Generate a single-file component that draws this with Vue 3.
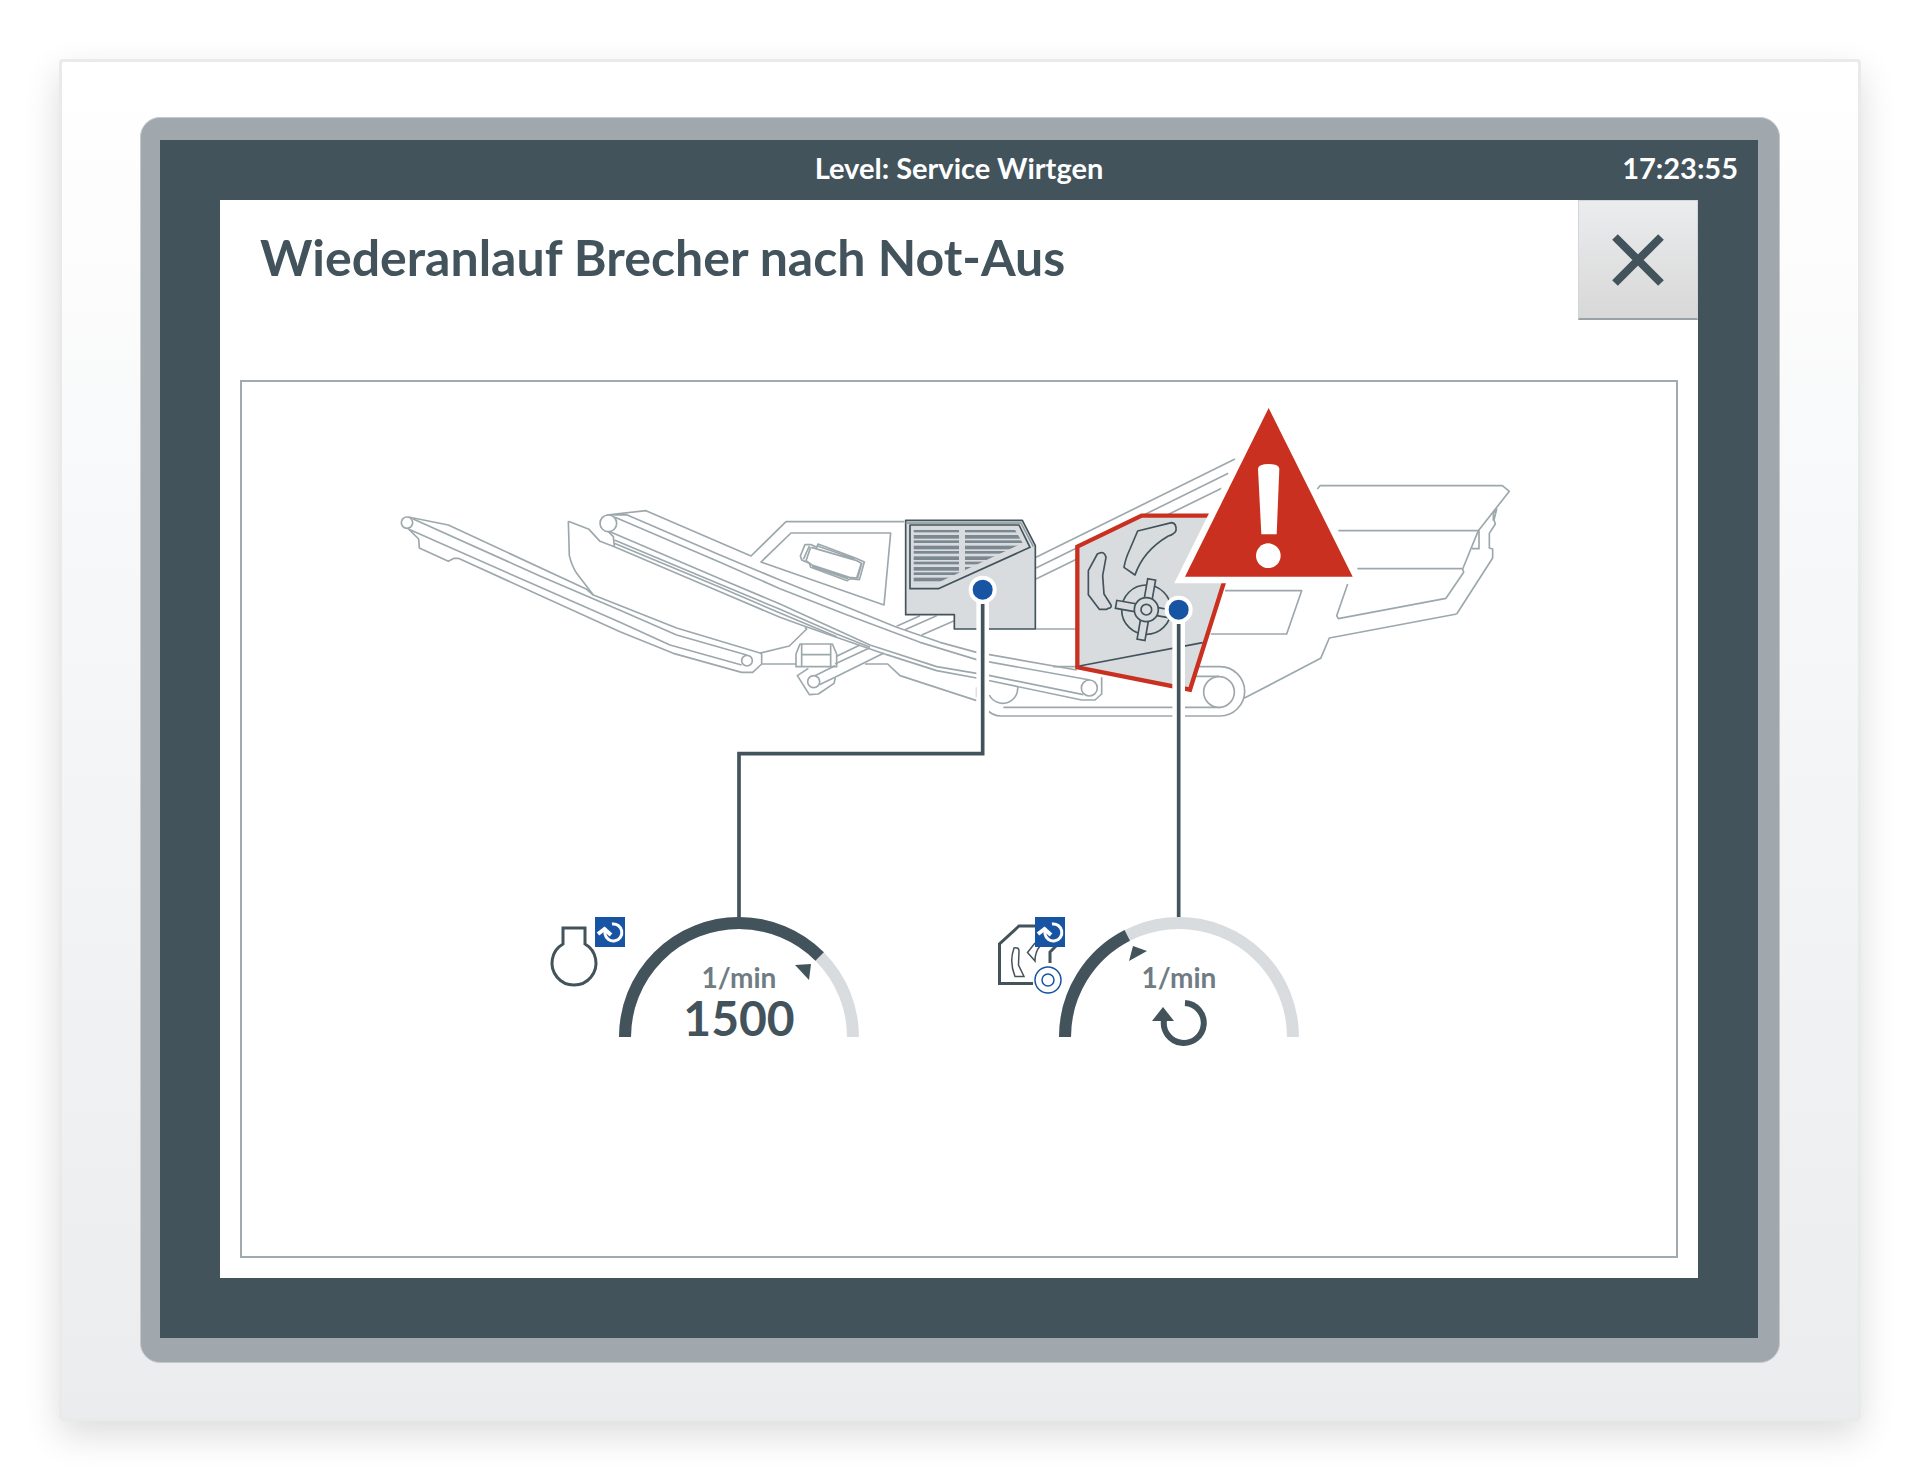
<template>
  <div class="page">
    <div class="housing">
      <div class="bezel">
        <div class="screen">
          <header class="status-bar">
            <span class="level">Level: Service Wirtgen</span>
            <time class="clock">17:23:55</time>
          </header>

          <main class="dialog">
            <div class="dialog-head">
              <h1>Wiederanlauf Brecher nach Not-Aus</h1>
              <button type="button" class="close" aria-label="Schließen">
                <svg viewBox="0 0 52 52" width="52" height="52">
                  <path d="M3 3L49 49M49 3L3 49" />
                </svg>
              </button>
            </div>

            <section class="frame">
              <svg class="machine" viewBox="0 -2 4302 1605" role="img" aria-label="Maschine">
                <defs>
                  <clipPath id="louvre">
                    <path d="M580 117H885L908 157L650 278H580Z" />
                  </clipPath>
                </defs>

                <!-- side discharge conveyor -->
                <g class="line" transform="translate(414 324)">
                  <path d="M565 92L627 116L660 152L703 168M565 92L568 195Q575 225 590 248L640 313" />
                  <path d="M85 79L205 103L620 296L640 313L890 412L1140 487L1145 490V520L1118 545H1085L880 488L720 423L235 203H222L205 212L118 172L116 145L84 113" />
                  <path d="M98 84L480 256L720 359L890 433L1100 493" />
                  <path d="M90 117L440 272L720 395L870 463L1085 523" />
                  <circle cx="81" cy="96" r="17" />
                  <circle cx="1101" cy="510" r="16" />
                  <path d="M1140 487L1228 466L1280 415L1275 410M1145 520H1248" />
                </g>

                <!-- main conveyor and chassis -->
                <g class="line" transform="translate(1434 324)">
                  <path d="M-340 73L-222 60L93 196L198 93H553" />
                  <path d="M213 127H512L492 343L123 214Z" />
                  <path d="M-335 73L-280 72L0 193L180 268L530 410L660 455L770 485L1070 538" />
                  <path d="M-315 80L0 215L180 294L380 372L600 455L770 507L1110 568" />
                  <path d="M-330 123L0 264L180 340L450 463L650 528L810 555L1090 612" />
                  <path d="M-317 148L0 281L180 356L350 430L450 470" />
                  <path d="M-317 158L0 290L180 367L350 438" />
                  <path d="M-335 123L-320 138L-317 168L0 303L180 380L250 405L500 492L650 540L770 562L1085 628H1125L1145 610V560" />
                  <circle cx="-335" cy="98" r="25" />
                  <circle cx="1108" cy="592" r="24" />

                  <!-- silencer -->
                  <path d="M274 162H255L241 196L245 208L268 218L272 230L382 270L390 264L418 267L433 214L408 203L294 160L290 170Z" />
                  <path d="M274 170L408 209L424 218L410 262L388 260L278 224L258 210L272 170M268 166L250 206M426 216L412 264M292 166L404 204M276 228L384 264" />

                  <path d="M240 460H337L350 490V528H228V490ZM245 460V528M332 460V528M245 492H332" />
                  <path d="M265 533L232 555L268 612L295 610L342 578L346 562" />
                  <path d="M350 497L420 463M345 520L448 472M285 555L345 525M298 582L345 560L492 487" />
                  <path d="M530 407L600 375M555 417L650 375M605 433L703 390" />
                  <circle cx="281" cy="573" r="18" />

                  <path d="M435 520H503L540 555L770 630M770 590V620" />
                  <path d="M948 415H1070M1000 528H1070" />
                  <path d="M893 588A45 45 0 0 1 808 613M850 650H1500M800 655Q815 676 845 676H1500" />
                </g>

                <!-- feed side -->
                <g class="line" transform="translate(2394 24)">
                  <path d="M-12 500L585 205M-12 532L565 248M-12 565L545 293" />
                  <path d="M110 828H540A74 74 0 0 1 540 976M300 857H537" />
                  <path d="M555 600H785L740 730H512" />
                  <circle cx="537" cy="904" r="46" />
                  <path d="M612 923L842 803L868 742L1250 670" />
                </g>
                <g class="line" transform="translate(3054 174)">
                  <path d="M590 520L698 352V325L688 322V278L706 250L702 238L710 205L700 218V240" />
                  <path d="M172 145L180 135H727L748 152L655 270L608 385L611 395L558 473L235 534L230 525L263 430" />
                  <path d="M235 270H657V324H636M292 384H606" />
                </g>

                <!-- engine -->
                <g transform="translate(1434 324)">
                  <path class="body" d="M557 89H907L946 165V415H703V372H557Z" />
                  <path class="thin" d="M557 97H903L940 168" />
                  <path class="body" d="M570 103H897L930 170L655 294H570Z" />
                  <g clip-path="url(#louvre)">
                    <rect
                      v-for="n in 11"
                      :key="n"
                      class="slat"
                      x="580"
                      :y="101 + n * 16"
                      width="330"
                      :height="n % 2 ? 8 : 11"
                    />
                    <rect class="post" x="717" y="110" width="18" height="180" />
                  </g>
                  <path class="halo" d="M788 297V789" />
                  <path class="lead" d="M788 340V789H57V1283" />
                  <circle class="dot" cx="788" cy="297" r="36" />
                </g>

                <!-- crusher -->
                <g transform="translate(2394 24)">
                  <path class="alarm" d="M112 468L305 375H615L450 897L112 830Z" />
                  <g class="part">
                    <path d="M118 826L488 756" />
                    <path d="M172 490Q192 478 198 500L188 555L192 610L213 643Q216 652 205 653L200 656H178L145 612V540Z" />
                    <path d="M293 421L395 396Q410 398 408 420Q402 432 385 436Q310 480 285 553L252 530Q256 505 270 475Z" />
                    <circle cx="319" cy="657" r="74" />
                    <rect
                      v-for="angle in [10, 100, 190, 280]"
                      :key="angle"
                      x="307"
                      y="565"
                      width="24"
                      height="60"
                      :transform="`rotate(${angle} 319 657)`"
                    />
                    <circle cx="319" cy="657" r="36" />
                    <circle cx="319" cy="657" r="16" />
                  </g>
                  <path class="halo" d="M416 657V1100" />
                  <path class="lead" d="M416 700V1583" />
                  <circle class="dot" cx="416" cy="657" r="36" />
                  <path class="warning-edge" d="M686 52L435 558H938Z" />
                  <path class="warning" d="M686 52L435 558H938Z" />
                  <path class="mark" d="M654 234Q656 220 686 220Q716 220 718 234L710 431H664Z" />
                  <circle class="mark" cx="685" cy="495" r="37" />
                </g>
              </svg>

              <div class="gauges">
                <div v-for="gauge in gauges" :key="gauge.id" class="gauge" :class="gauge.id">
                  <svg class="dial" viewBox="0 0 310 120">
                    <path class="track" :d="arc" />
                    <path
                      class="fill"
                      :d="arc"
                      pathLength="100"
                      :stroke-dasharray="`${gauge.level} 100`"
                    />
                    <path class="pointer" :d="gauge.pointer" />

                    <path v-if="gauge.id === 'motor'" class="symbol" d="M14 11H36V27A22 22 0 1 1 14 27Z" />
                    <template v-else>
                      <path class="symbol" d="M47 9H30L10.500 27V66.500H44M68 28L61 35V46" />
                      <path class="symbol fine" d="M25 31Q30 30 30 34L29.500 48L35 59.500H26Q20 45 25 31Z" />
                      <path class="symbol fine" d="M46 26L38.500 35.500L46 44Q46 35 51 29" />
                      <circle class="ring" cx="59" cy="63" r="13" />
                      <circle class="ring" cx="59" cy="63" r="6" />
                    </template>

                    <rect class="badge" x="46" width="30" height="30" />
                    <path class="badge-arrow" d="M63 7A8.500 8.500 0 1 1 56 17V14" />
                    <path class="badge-head" d="M49 17L55.500 12L62 18" />
                  </svg>
                  <div class="readout">
                    <span class="unit">1/min</span>
                    <strong v-if="gauge.value" class="value">{{ gauge.value }}</strong>
                    <svg v-else class="spin" viewBox="0 0 54 40" width="54" height="40">
                      <path class="spin-ring" d="M33 2A20 20 0 1 1 12 19" />
                      <path class="spin-head" d="M0 20L11 6L22 20Z" />
                    </svg>
                  </div>
                </div>
              </div>
            </section>
          </main>
        </div>
      </div>
    </div>
  </div>
</template>

<script setup>
const arc = 'M76 120A114 114 0 0 1 304 120';

// level is the filled part of the half circle in percent
const gauges = [
  { id: 'motor', level: 75, value: 1500, pointer: 'M246 48L262 47L260 63Z' },
  { id: 'brecher', level: 35, value: null, pointer: 'M144 29L158 34L140 44Z' },
];
</script>

<style>
body {
  margin: 0;
  background: #fff;
}
</style>

<style scoped>
.page,
.page * {
  box-sizing: border-box;
}

.page {
  --dark: #42535c;
  --blue: #1854a4;
  --red: #c9301f;
  --metal: #d8dcdf;
  display: flex;
  min-height: 100vh;
  padding: 59px;
  color: var(--dark);
  font-family: Lato, "Liberation Sans", sans-serif;
}

.housing {
  display: flex;
  flex: 1;
  padding: 55px 78px;
  border: 3px solid #e9ebeb;
  border-radius: 4px;
  background: linear-gradient(#fff, #f4f5f7 50%, #ebecee);
  box-shadow: 0 14px 36px rgba(0, 0, 0, 0.14);
}

.bezel {
  display: flex;
  flex: 1;
  padding: 22px 21px 24px 19px;
  border: 1px solid #c3c8cb;
  border-radius: 20px;
  background: #a0a7ad;
}

.screen {
  display: flex;
  flex: 1;
  flex-direction: column;
  padding: 0 60px 60px;
  background: var(--dark);
}

.status-bar {
  display: grid;
  grid-template-columns: 1fr auto 1fr;
  align-items: center;
  height: 60px;
  margin: 0 -40px;
  padding-bottom: 4px;
  color: #fff;
  font-size: 29px;
  font-weight: 700;
  line-height: 56px;
}

.level {
  grid-column: 2;
}

.clock {
  justify-self: end;
}

.dialog {
  display: flex;
  flex: 1;
  flex-direction: column;
  padding: 0 20px 20px;
  background: #fff;
}

.dialog-head {
  display: flex;
  justify-content: space-between;
  min-height: 180px;
  margin-right: -20px;
  padding-left: 20px;
}

h1 {
  margin: 0;
  font-size: 50px;
  font-weight: 700;
  line-height: 114px;
}

.close {
  display: grid;
  place-items: center;
  width: 120px;
  height: 120px;
  padding: 0;
  border: 1px solid #d2d6d8;
  border-bottom: 2px solid #98a3a7;
  background: linear-gradient(#ebecee, #d8d8d8);
  cursor: pointer;
}

.close path {
  fill: none;
  stroke: var(--dark);
  stroke-width: 8;
}

.frame {
  flex: 1;
  border: 2px solid #a0abaf;
}

.machine {
  display: block;
  width: 100%;
  height: auto;
}

.machine path {
  stroke-linejoin: round;
}

.line {
  fill: none;
  stroke: #9da8ad;
  stroke-width: 5;
}

.line circle {
  fill: #fff;
}

.body {
  fill: var(--metal);
  stroke: var(--dark);
  stroke-width: 5;
}

.thin {
  fill: none;
  stroke: #8b969c;
  stroke-width: 4;
}

.slat {
  fill: #7c888f;
}

.post {
  fill: var(--metal);
}

.halo {
  fill: none;
  stroke: #fff;
  stroke-width: 38;
}

.machine .lead {
  fill: none;
  stroke: var(--dark);
  stroke-width: 11;
  stroke-linejoin: miter;
}

.dot {
  fill: var(--blue);
  stroke: #fff;
  stroke-width: 12;
}

.machine .alarm {
  fill: var(--metal);
  stroke: var(--red);
  stroke-width: 13;
  stroke-linejoin: miter;
}

.part {
  fill: var(--metal);
  stroke: var(--dark);
  stroke-width: 5;
}

.warning {
  fill: var(--red);
}

.machine .warning-edge {
  fill: #fff;
  stroke: #fff;
  stroke-width: 40;
  stroke-linejoin: miter;
}

.mark {
  fill: #fff;
}

.gauges {
  display: grid;
  grid-template-columns: 307fr 310fr 130fr 310fr 377fr;
}

.gauge {
  display: grid;
}

.motor {
  grid-column: 2;
}

.brecher {
  grid-column: 4;
}

.dial,
.readout {
  grid-area: 1 / 1;
}

.dial {
  width: 100%;
  overflow: visible;
}

.track,
.fill {
  fill: none;
  stroke: var(--metal);
  stroke-width: 12;
}

.fill {
  stroke: var(--dark);
}

.pointer,
.spin-head {
  fill: var(--dark);
}

.symbol {
  fill: none;
  stroke: var(--dark);
  stroke-width: 3;
}

.symbol.fine {
  stroke-width: 1.5;
}

.ring {
  fill: #fff;
  stroke: var(--blue);
  stroke-width: 1.5;
}

.badge {
  fill: var(--blue);
}

.badge-arrow,
.badge-head {
  fill: none;
  stroke: #fff;
  stroke-width: 3;
}

.badge-head {
  stroke-width: 4;
}

.readout {
  display: flex;
  flex-direction: column;
  align-items: center;
  padding: 44px 0 0 70px;
}

.unit {
  color: #707c83;
  font-size: 28px;
  font-weight: 700;
  line-height: 32px;
}

.value {
  font-size: 48px;
  font-weight: 700;
  line-height: 50px;
}

.spin {
  margin-top: 8px;
  overflow: visible;
}

.spin-ring {
  fill: none;
  stroke: var(--dark);
  stroke-width: 6;
}
</style>
